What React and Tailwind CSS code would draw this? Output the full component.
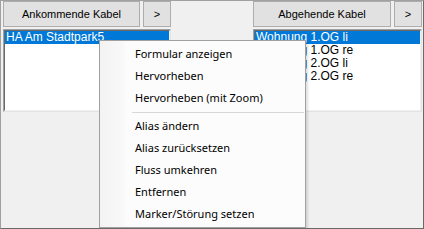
import React from "react";

const sans = { fontFamily: '"Liberation Sans", Arial, sans-serif' };
const menuFont = { fontFamily: '"Noto Sans", "Open Sans", sans-serif' };

function Btn({ children, className = "" }) {
  return (
    <div
      className={`h-[26px] flex items-center justify-center bg-[#e1e1e1] border border-[#adadad] text-[11px] text-black ${className}`}
    >
      {children}
    </div>
  );
}

function ListBox({ items, className = "" }) {
  return (
    <div
      className={`h-[83px] bg-white border-t border-l border-[#a0a0a0] border-r border-b border-r-[#e3e3e3] border-b-[#e3e3e3] ${className}`}
    >
      <div className="h-full border-t border-l border-[#696969] border-r border-b border-r-[#f0f0f0] border-b-[#f0f0f0]">
        {items.map((t, i) => (
          <div
            key={i}
            className={`h-[13px] leading-[13px] text-[12px] pl-[1px] whitespace-nowrap ${
              i === 0 ? "bg-[#0078d7] text-white" : "text-black"
            }`}
          >
            {t}
          </div>
        ))}
      </div>
    </div>
  );
}

const menuItems1 = ["Formular anzeigen", "Hervorheben", "Hervorheben (mit Zoom)"];
const menuItems2 = [
  "Alias ändern",
  "Alias zurücksetzen",
  "Fluss umkehren",
  "Entfernen",
  "Marker/Störung setzen",
];

function MenuItem({ children }) {
  return (
    <div className="h-[22px] flex items-center">
      <div className="w-[35px] shrink-0" />
      <span className="text-[11px] text-black whitespace-nowrap">{children}</span>
    </div>
  );
}

export default function App() {
  return (
    <div
      className="relative w-[424px] h-[229px] bg-[#f0f0f0] border-l border-t border-[#a0a0a0] border-r border-b border-r-[#696969] border-b-[#696969] overflow-hidden"
      style={sans}
    >
      <div className="flex justify-between pl-[2px] pr-[1px]">
        <div className="w-[168px] flex flex-col gap-[2px]">
          <div className="flex gap-[3px]">
            <Btn className="flex-1">Ankommende Kabel</Btn>
            <Btn className="w-[28px]">&gt;</Btn>
          </div>
          <ListBox items={["HA Am Stadtpark5"]} />
        </div>
        <div className="w-[169px] flex flex-col gap-[2px]">
          <div className="flex gap-[3px]">
            <Btn className="flex-1">Abgehende Kabel</Btn>
            <Btn className="w-[28px]">&gt;</Btn>
          </div>
          <ListBox
            items={["Wohnung 1.OG li", "Wohnung 1.OG re", "Wohnung 2.OG li", "Wohnung 2.OG re"]}
          />
        </div>
      </div>

      <div
        className="absolute left-[98px] top-[39px] w-[207px] border border-[#a0a0a0] py-[2px] bg-[linear-gradient(to_right,#f3f3f3_0px,#f9f9f9_24px,#fcfcfc_25px,#fcfcfc_100%)] shadow-[2px_2px_2px_rgba(0,0,0,0.12)]"
        style={menuFont}
      >
        {menuItems1.map((t) => (
          <MenuItem key={t}>{t}</MenuItem>
        ))}
        <div className="h-[6px] flex items-center">
          <div className="w-[32px] shrink-0" />
          <div className="flex-1 h-px bg-[#d7d7d7] mr-[1px]" />
        </div>
        {menuItems2.map((t) => (
          <MenuItem key={t}>{t}</MenuItem>
        ))}
      </div>
    </div>
  );
}
